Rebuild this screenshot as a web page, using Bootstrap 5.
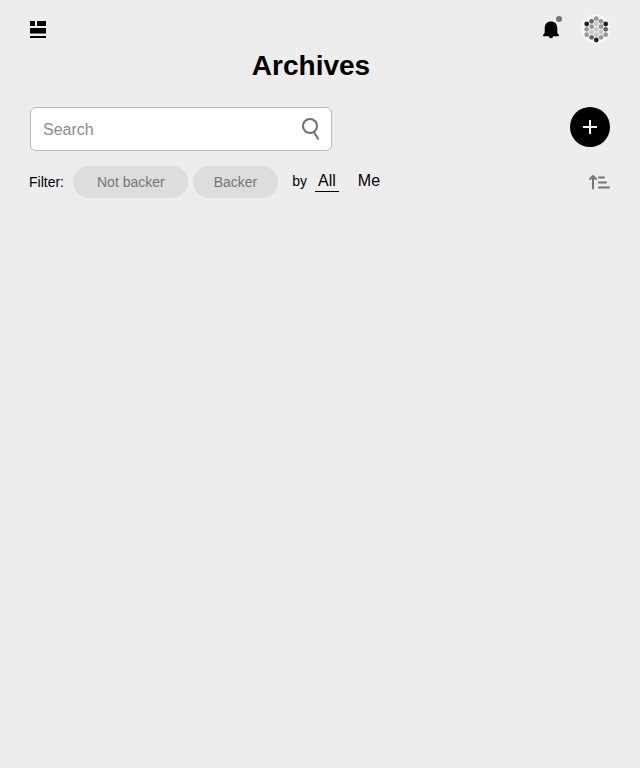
<!DOCTYPE html>
<html lang="en">
<head>
<meta charset="utf-8">
<meta name="viewport" content="width=device-width, initial-scale=1">
<title>Archives</title>
<link href="https://cdn.jsdelivr.net/npm/bootstrap@5.3.0/dist/css/bootstrap.min.css" rel="stylesheet">
<style>
body { background: #ededed; color: #000; font-family: "Liberation Sans", Arial, sans-serif; font-size: 14px; line-height: 20px; }
.page-shell { padding: 14px 30px; }
.topbar { height: 30px; }
.topbar svg, .tools svg, .filters svg { display: block; }
.page-title { font-size: 28px; line-height: 36px; font-weight: 700; padding: 4px 18px 0 0; }
.tools { padding-top: 23px; }
.search-box { width: 52%; height: 44px; background: #fff; border: 1px solid #bababa; border-radius: 6px; padding: 0 11px 0 12px; }
.search-input { height: 42px; font-size: 16px; min-width: 0; outline: 0; background: transparent; color: #000; }
.search-box .search-input { padding: 2px 0 0; }
.search-input::placeholder { color: #8c8c8c; opacity: 1; }
.search-box:focus-within { border-color: #000; }
.add-btn { width: 40px; height: 40px; background: #000; }
.filters { padding-top: 15px; }
.filter-label { margin: 0 9px 0 -1px; }
.pill { height: 32px; padding: 0 24px 0 23px; background: #ddd; color: #757575; }
.pill-first { padding: 0 23px 0 24px; }
.pill-last { padding: 0 21px; margin-left: 5px; }
.by-label { margin: 0 8px 2px 14px; }
.by-link { color: #000; font-size: 16px; line-height: 20px; padding: 0 3px; margin-bottom: 2px; border-bottom: 1px solid transparent; }
.by-link.active { border-color: #000; }
</style>
</head>
<body>
<div class="page-shell">
  <header>
    <div class="topbar d-flex align-items-center justify-content-between">
      <button type="button" class="border-0 bg-transparent p-0" aria-label="Dashboard">
        <svg width="16" height="18" viewBox="0 0 16 18"><path d="M0 1h5v5H0zM7 1h9v5H7zM0 8h16v5.500H0zM0 16h16v2H0z"/></svg>
      </button>
      <div class="d-flex align-items-center">
        <button type="button" class="border-0 bg-transparent p-0 me-3" aria-label="Notifications">
          <svg width="24" height="30" viewBox="0 0 24 30"><path d="M11 7.500c-3.800 0-6.300 2.700-6.300 6.500v3.900c0 1.100-.4 1.700-1.300 2.500-.8.700-.5 1.900.6 1.900h4.800c.2 1.200 1.100 1.900 2.200 1.900s2-.7 2.200-1.900H18c1.100 0 1.400-1.200.6-1.900-.9-.8-1.300-1.400-1.300-2.500V14c0-3.800-2.500-6.500-6.300-6.500z"/><circle cx="19" cy="5" r="3" fill="#757575"/></svg>
        </button>
        <button type="button" class="border-0 bg-transparent p-0" aria-label="Profile">
          <svg width="30" height="30" viewBox="0 0 30 30">
            <circle cx="15.500" cy="15" r="14.500" fill="#f7f7f7"/>
            <g fill="#999"><circle cx="6.700" cy="15.300" r="2.400"/><circle cx="6.700" cy="20.700" r="2.400"/><circle cx="11.600" cy="12.700" r="2.400"/><circle cx="16.300" cy="4.700" r="2.400"/><circle cx="21" cy="7.300" r="2.400"/><circle cx="21" cy="12.700" r="2.400"/><circle cx="21" cy="23.300" r="2.400"/><circle cx="25.700" cy="20.700" r="2.400"/></g>
            <g fill="#c8c8c8"><circle cx="11.600" cy="18" r="2.400"/><circle cx="16.300" cy="10" r="2.400"/><circle cx="16.300" cy="15.300" r="2.400"/><circle cx="16.300" cy="20.700" r="2.400"/><circle cx="21" cy="18" r="2.400"/></g>
            <g fill="#666"><circle cx="11.600" cy="7.300" r="2.400"/><circle cx="11.600" cy="23.300" r="2.400"/><circle cx="25.700" cy="15.300" r="2.400"/></g>
            <g fill="#222"><circle cx="6.700" cy="10" r="2.400"/><circle cx="25.700" cy="10" r="2.400"/><circle cx="16.300" cy="26" r="2.400"/></g>
          </svg>
        </button>
      </div>
    </div>
    <h1 class="page-title text-center m-0">Archives</h1>
  </header>
  <main>
    <div class="tools d-flex align-items-start justify-content-between">
      <form class="search-box d-flex align-items-center" role="search">
        <input type="text" class="search-input flex-grow-1 border-0" placeholder="Search" aria-label="Search">
        <button type="submit" class="border-0 bg-transparent p-0" aria-label="Submit search">
          <svg width="18" height="24" viewBox="0 0 18 24" fill="none" stroke="#707070" stroke-width="2"><circle cx="8" cy="9" r="7"/><path d="M11.500 14.500l5 8"/></svg>
        </button>
      </form>
      <button type="button" class="add-btn rounded-circle border-0 p-0 d-flex align-items-center justify-content-center" aria-label="Add">
        <svg width="14" height="14" viewBox="0 0 14 14" stroke="#fff" stroke-width="2"><path d="M7 0v14M0 7h14"/></svg>
      </button>
    </div>
    <div class="filters d-flex align-items-center">
      <span class="filter-label">Filter:</span>
      <button type="button" class="pill pill-first rounded-pill border-0">Not backer</button>
      <button type="button" class="pill pill-last rounded-pill border-0">Backer</button>
      <span class="by-label">by</span>
      <a href="#all" class="by-link active text-decoration-none" aria-current="true">All</a>
      <a href="#me" class="by-link text-decoration-none ms-3">Me</a>
      <button type="button" class="border-0 bg-transparent p-0 ms-auto" aria-label="Sort">
        <svg width="22" height="16" viewBox="0 0 22 16" fill="none" stroke="#757575" stroke-width="2" stroke-linecap="round" stroke-linejoin="round"><path d="M5 14.500V2M2 5l3-3 3 3M11 3.500h5M11 8.500h7M11 13.500h10"/></svg>
      </button>
    </div>
  </main>
</div>
<script src="https://cdn.jsdelivr.net/npm/bootstrap@5.3.0/dist/js/bootstrap.bundle.min.js"></script>
</body>
</html>
